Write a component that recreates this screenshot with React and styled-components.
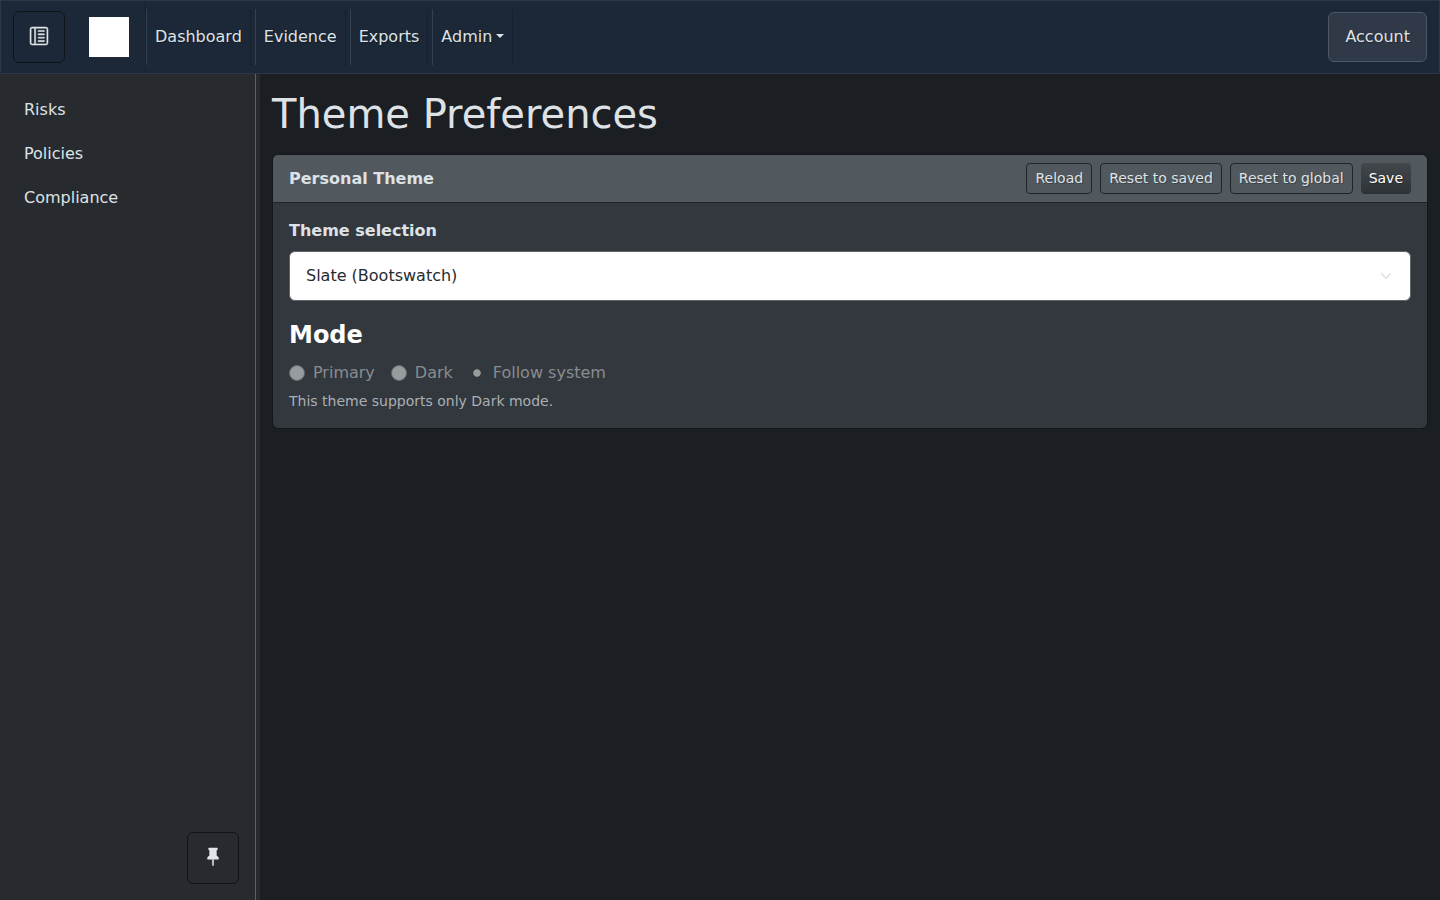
import React from "react";
import styled, { createGlobalStyle } from "styled-components";
import { BsLayoutTextSidebarReverse, BsPinFill } from "react-icons/bs";

const GlobalStyle = createGlobalStyle`
  *, *::before, *::after { box-sizing: border-box; }
  body {
    margin: 0;
    background: #1b1e22;
    color: #dee2e6;
    font: 16px/24px "DejaVu Sans", sans-serif;
  }
`;

const Page = styled.div`
  height: 100vh;
  display: flex;
  flex-direction: column;
  overflow: hidden;
`;

const Header = styled.header`
  flex: none;
  display: flex;
  align-items: center;
  height: 74px;
  padding: 0 12px;
  background: #1c2837;
  border: 1px solid #2c3848;
`;

const IconButton = styled.button`
  display: flex;
  align-items: center;
  justify-content: center;
  width: 52px;
  height: 52px;
  padding: 0 0 2px;
  color: #e3e6e9;
  background: transparent;
  border: 1px solid #101418;
  border-radius: 6px;
  svg {
    display: block;
    overflow: visible;
    stroke-width: 0.45;
  }
`;

const Brand = styled.div`
  display: flex;
  align-items: center;
  height: 72px;
  padding: 0 16px 0 24px;
  border-right: 1px solid #152130;
`;

const Logo = styled.div`
  width: 40px;
  height: 40px;
  background: #fff;
`;

const Nav = styled.nav`
  display: flex;
  gap: 4px;
`;

const NavLink = styled.a`
  display: flex;
  align-items: center;
  height: 56px;
  padding: 0 8px;
  color: #dee2e6;
  border-left: 1px solid #334050;
  border-right: 1px solid #16212e;
  text-shadow: 1px 1px 1px rgba(0, 0, 0, 0.3);
`;

const Caret = styled.span`
  margin: 0 0 2px 4px;
  border-top: 4.8px solid currentColor;
  border-left: 4.8px solid transparent;
  border-right: 4.8px solid transparent;
`;

const AccountButton = styled.button`
  height: 50px;
  margin-left: auto;
  padding: 0 16px;
  font: inherit;
  color: #dee2e6;
  background: #2f3947;
  border: 1px solid #4d5864;
  border-radius: 6px;
  text-shadow: 1px 1px 1px rgba(0, 0, 0, 0.3);
`;

const Body = styled.div`
  flex: 1;
  display: flex;
  min-height: 0;
`;

const Sidebar = styled.aside`
  flex: none;
  display: flex;
  flex-direction: column;
  width: 256px;
  padding: 14px 16px 16px;
  background: #272b2f;
  border-right: 1px solid #5d6063;
`;

const SideLink = styled.a`
  height: 44px;
  padding: 10px 8px;
  color: #dee2e6;
`;

const PinSlot = styled.div`
  display: flex;
  justify-content: flex-end;
  margin-top: auto;
`;

const Resizer = styled.div`
  flex: none;
  width: 4px;
  background: #272b2f;
`;

const Main = styled.main`
  flex: 1;
  padding: 16px 12px;
`;

const Title = styled.h1`
  margin: 0 0 16px;
  font-size: 40px;
  line-height: 48px;
  font-weight: 400;
`;

const Card = styled.section`
  background: #32383e;
  background-clip: padding-box;
  border: 1px solid #15181b;
  border-radius: 6px;
  overflow: hidden;
`;

const CardHeader = styled.div`
  display: flex;
  align-items: center;
  gap: 8px;
  padding: 8px 16px;
  background: #51595f;
  border-bottom: 1px solid #212529;
`;

const CardTitle = styled.strong`
  margin-right: auto;
`;

const SmallButton = styled.button`
  height: 31px;
  padding: 0 8px 1px;
  font: 14px/21px "DejaVu Sans", sans-serif;
  color: ${(p) => (p.$solid ? "#fff" : "#dee2e6")};
  background: ${(p) => (p.$solid ? "linear-gradient(#43484c, #2e3236)" : "transparent")};
  border: ${(p) => (p.$solid ? "0" : "1px solid #212529")};
  border-radius: 4px;
  text-shadow: 1px 1px 1px rgba(0, 0, 0, 0.3);
`;

const CardBody = styled.div`
  padding: 16px;
`;

const FieldLabel = styled.div`
  margin-bottom: 8px;
  font-weight: 700;
`;

const Select = styled.div`
  display: flex;
  align-items: center;
  justify-content: space-between;
  height: 50px;
  padding: 0 16px 1px;
  color: #272b30;
  background: #fff;
  border: 1px solid #5f6468;
  border-radius: 6px;
`;

const Legend = styled.h2`
  margin: 16px 0 8px;
  font-size: 24px;
  line-height: 36px;
  font-weight: 700;
  color: #fff;
`;

const RadioRow = styled.div`
  display: flex;
  gap: 16px;
  margin-bottom: 6px;
`;

const RadioOption = styled.label`
  display: flex;
  align-items: center;
  gap: 8px;
  color: #888c90;
`;

const RadioDot = styled.span`
  width: 16px;
  height: 16px;
  border: 1px solid ${(p) => (p.$checked ? "#33383c" : "#666b70")};
  border-radius: 50%;
  background: ${(p) =>
    p.$checked ? "radial-gradient(circle, #989b9e 3.3px, #33383c 4.2px)" : "#989b9e"};
`;

const Help = styled.div`
  font-size: 14px;
  line-height: 21px;
  color: #abafb4;
`;

const navItems = ["Dashboard", "Evidence", "Exports", "Admin"];
const sideItems = ["Risks", "Policies", "Compliance"];
const modes = ["Primary", "Dark", "Follow system"];

export default function App() {
  return (
    <Page>
      <GlobalStyle />
      <Header>
        <IconButton aria-label="Toggle sidebar">
          <BsLayoutTextSidebarReverse size={18} />
        </IconButton>
        <Brand>
          <Logo />
        </Brand>
        <Nav>
          {navItems.map((item) => (
            <NavLink key={item}>
              {item}
              {item === "Admin" && <Caret />}
            </NavLink>
          ))}
        </Nav>
        <AccountButton>Account</AccountButton>
      </Header>
      <Body>
        <Sidebar>
          {sideItems.map((item) => (
            <SideLink key={item}>{item}</SideLink>
          ))}
          <PinSlot>
            <IconButton aria-label="Pin sidebar">
              <BsPinFill size={18} />
            </IconButton>
          </PinSlot>
        </Sidebar>
        <Resizer />
        <Main>
          <Title>Theme Preferences</Title>
          <Card>
            <CardHeader>
              <CardTitle>Personal Theme</CardTitle>
              <SmallButton>Reload</SmallButton>
              <SmallButton>Reset to saved</SmallButton>
              <SmallButton>Reset to global</SmallButton>
              <SmallButton $solid>Save</SmallButton>
            </CardHeader>
            <CardBody>
              <FieldLabel>Theme selection</FieldLabel>
              <Select>
                Slate (Bootswatch)
                <svg width="16" height="12" viewBox="0 0 16 16" fill="none" stroke="#dee2e6" strokeWidth="2" strokeLinecap="round" strokeLinejoin="round">
                  <path d="m2 5 6 6 6-6" />
                </svg>
              </Select>
              <Legend>Mode</Legend>
              <RadioRow>
                {modes.map((mode) => (
                  <RadioOption key={mode}>
                    <RadioDot $checked={mode === "Follow system"} />
                    {mode}
                  </RadioOption>
                ))}
              </RadioRow>
              <Help>This theme supports only Dark mode.</Help>
            </CardBody>
          </Card>
        </Main>
      </Body>
    </Page>
  );
}
